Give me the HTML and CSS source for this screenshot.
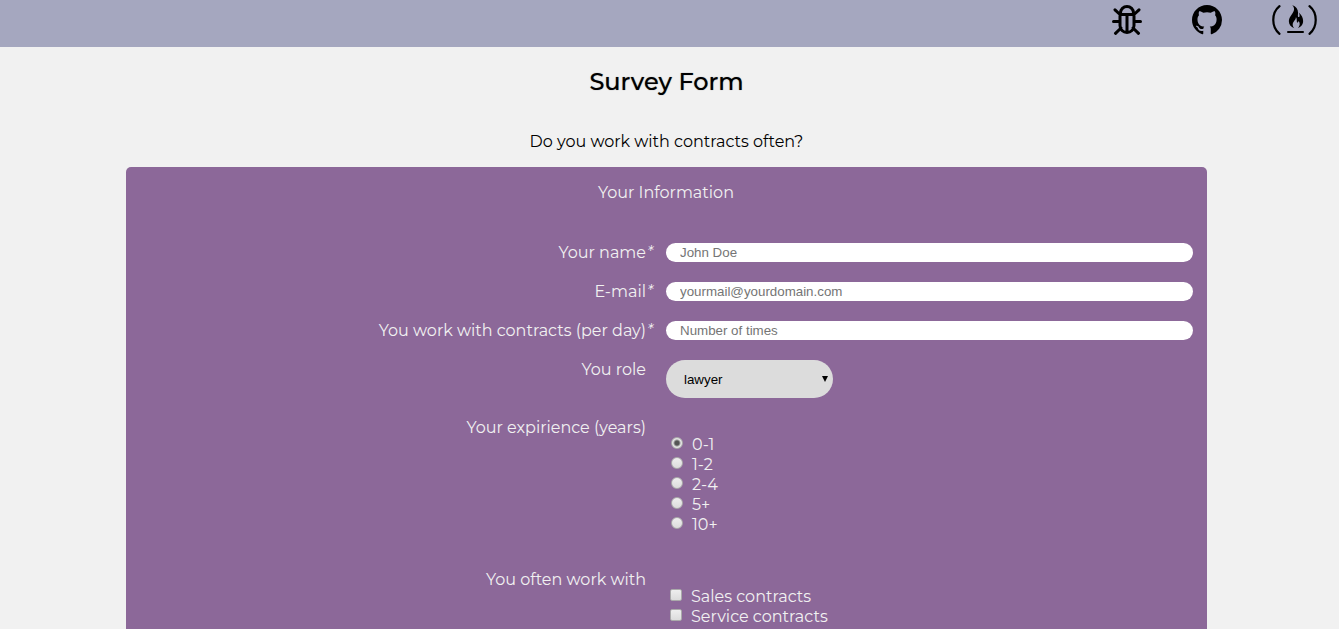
FILE: index.html
```html
<!DOCTYPE html>
<html lang="en">
<head>
<meta charset="utf-8">
<meta name="viewport" content="width=device-width, initial-scale=1">
<title>Survey Form</title>
<link rel="stylesheet" href="styles.css">
</head>
<body>
<header class="topbar">
  <a class="topbar-link" href="#bug" aria-label="Report a bug">
    <svg class="icon" viewBox="0 0 30 30" fill="none" stroke="#000" stroke-width="3" stroke-linecap="round" stroke-linejoin="round">
      <path d="M8 9.500h14v11a7 7 0 0 1-14 0zM8.500 9.500V8a6.500 6.500 0 0 1 13 0v1.500M15 9.500v17M1.500 16.500H8M22 16.500h6.500M8 9.500 3 4.800M22 9.500l5-4.700M9 23l-5.500 5.300M21 23l5.500 5.300"/>
    </svg>
  </a>
  <a class="topbar-link" href="#github" aria-label="GitHub">
    <svg class="icon" viewBox="0 0 16 16">
      <path d="M8 0C3.580 0 0 3.580 0 8c0 3.540 2.290 6.530 5.470 7.590.4.070.55-.17.55-.38 0-.19-.01-.82-.01-1.490-2.010.37-2.530-.49-2.690-.94-.09-.23-.48-.94-.82-1.130-.28-.15-.68-.52-.01-.53.63-.01 1.080.58 1.230.82.72 1.210 1.870.87 2.330.66.070-.52.28-.87.51-1.070-1.780-.2-3.640-.89-3.640-3.950 0-.87.31-1.590.82-2.150-.08-.2-.36-1.020.08-2.120 0 0 .67-.21 2.200.82a7.600 7.600 0 0 1 4 0c1.530-1.040 2.200-.82 2.200-.82.44 1.100.16 1.920.08 2.120.51.56.82 1.270.82 2.150 0 3.070-1.870 3.750-3.650 3.950.29.25.54.73.54 1.480 0 1.070-.01 1.930-.01 2.200 0 .21.15.46.55.38A8 8 0 0 0 16 8c0-4.420-3.580-8-8-8z"/>
    </svg>
  </a>
  <a class="topbar-link" href="#freecodecamp" aria-label="freeCodeCamp">
    <svg class="icon icon-wide" viewBox="0 0 46 30">
      <path d="M7.500 1.200C-.8 8-.8 22 7.500 28.800M37.500 1.200c8.300 6.800 8.300 20.800 0 27.600" fill="none" stroke="#000" stroke-width="2.200" stroke-linecap="round"/>
      <path d="M16 27h15" fill="none" stroke="#000" stroke-width="2" stroke-linecap="round"/>
      <path d="M20 0c4.500 1.500 6.500 5 6 9-.2 2-.2 3 .6 3 1.400 0 1.200-2.800.2-4.500 3.700 3 5 7.500 4 10.800-.8 2.500-2.500 4-5 4.900 2.400-2.500 2.400-5.500.7-7.200-.2 1.200-.7 1.700-1.300 1.700-.9-1.200.2-4-1.300-5.700.2 3-3.200 4.500-3.200 7.700 0 1.500.8 2.700 1.600 3.500-4.300-1.300-6.300-5.200-5.100-9.200 1.100-3.500 4.900-6.400 4.900-10 0-1.500-.9-3-2.100-4z"/>
    </svg>
  </a>
</header>
<main class="page">
  <h1 class="title">Survey Form</h1>
  <p class="description">Do you work with contracts often?</p>
  <form class="survey">
    <p class="survey-heading">Your Information</p>
    <div class="row">
      <label class="label" for="name">Your name<em class="mark">*</em></label>
      <input class="text-field" id="name" type="text" placeholder="John Doe" required>
    </div>
    <div class="row">
      <label class="label" for="email">E-mail<em class="mark">*</em></label>
      <input class="text-field" id="email" type="email" placeholder="yourmail@yourdomain.com" required>
    </div>
    <div class="row">
      <label class="label" for="number">You work with contracts (per day)<em class="mark">*</em></label>
      <input class="text-field" id="number" type="number" placeholder="Number of times" required>
    </div>
    <div class="row">
      <label class="label" for="role">You role<em class="mark"></em></label>
      <div class="select-wrap">
        <select class="select" id="role"><option>lawyer</option></select>
        <svg class="arrow" viewBox="0 0 6 6" aria-hidden="true"><path d="M0 0h6L3 6z"/></svg>
      </div>
    </div>
    <div class="row" role="radiogroup" aria-labelledby="experience">
      <span class="label" id="experience">Your expirience (years)<em class="mark"></em></span>
      <ul class="options">
        <li><label class="option"><input class="tick radio" type="radio" name="years" checked>0-1</label></li>
        <li><label class="option"><input class="tick radio" type="radio" name="years">1-2</label></li>
        <li><label class="option"><input class="tick radio" type="radio" name="years">2-4</label></li>
        <li><label class="option"><input class="tick radio" type="radio" name="years">5+</label></li>
        <li><label class="option"><input class="tick radio" type="radio" name="years">10+</label></li>
      </ul>
    </div>
    <div class="row" role="group" aria-labelledby="contracts">
      <span class="label" id="contracts">You often work with<em class="mark"></em></span>
      <ul class="options">
        <li><label class="option"><input class="tick" type="checkbox" name="contracts">Sales contracts</label></li>
        <li><label class="option"><input class="tick" type="checkbox" name="contracts">Service contracts</label></li>
      </ul>
    </div>
  </form>
</main>
</body>
</html>
```
FILE: styles.css
```css
* {
  box-sizing: border-box;
}

body {
  margin: 0;
  background: #f1f1f1;
  color: #000;
  font-family: Montserrat, Inter, "Open Sans", sans-serif;
  font-size: 16px;
  line-height: 20px;
}

.topbar {
  display: flex;
  justify-content: flex-end;
  gap: 50px;
  padding: 5px 21px 12px;
  background: #a5a7bf;
}

.topbar-link {
  display: block;
}

.icon {
  display: block;
  width: 30px;
  height: 30px;
}

.icon-wide {
  width: 46px;
}

.page {
  padding: 19px 132px 0 126px;
}

.title {
  margin: 0 0 34px;
  font-size: 24px;
  font-weight: 500;
  line-height: 32px;
  text-align: center;
  text-shadow: 0 0 1px rgba(0, 0, 0, 0.5);
}

.description {
  margin: 0 0 15px;
  text-align: center;
}

.survey {
  display: flex;
  flex-direction: column;
  gap: 20px;
  padding: 16px 14px 20px 13px;
  border-radius: 5px;
  background: #8c6899;
  color: #f1f1f1;
}

.survey-heading {
  margin: 0 0 20px;
  text-align: center;
}

.row {
  display: grid;
  grid-template-columns: 1fr 1fr;
  align-items: start;
}

.label {
  display: flex;
  justify-content: flex-end;
  line-height: 19px;
}

.mark {
  width: 20px;
  padding-left: 1px;
}

.text-field {
  width: 100%;
  height: 19px;
  padding: 1px 14px;
  border: 0;
  border-radius: 10px;
  background: #fff;
  color: #000;
  font-family: "Liberation Sans", Arial, sans-serif;
  appearance: textfield;
}

.text-field::placeholder {
  color: #757575;
}

.select-wrap {
  position: relative;
  width: 167px;
}

.select {
  display: block;
  width: 100%;
  height: 38px;
  padding: 0 18px;
  border: 0;
  border-radius: 19px;
  background: #dcdcdc;
  color: #000;
  font-family: "Liberation Sans", Arial, sans-serif;
  appearance: none;
}

.arrow {
  position: absolute;
  top: 16px;
  right: 5px;
  width: 6px;
  height: 6px;
  pointer-events: none;
}

.options {
  margin: 17px 0 15px;
  padding: 0 0 0 4px;
  list-style: none;
}

.option {
  display: flex;
  gap: 9px;
}

.tick {
  width: 12px;
  height: 12px;
  margin: 2px 0 0;
  border: 1px solid #aaa;
  border-radius: 2px;
  background: linear-gradient(#eee, #dcdcdc);
  appearance: none;
}

.radio {
  margin-left: 1px;
  border-radius: 50%;
}

.radio:checked {
  background: radial-gradient(circle, #555 0 2px, #e4e4e4 4px);
}
```
